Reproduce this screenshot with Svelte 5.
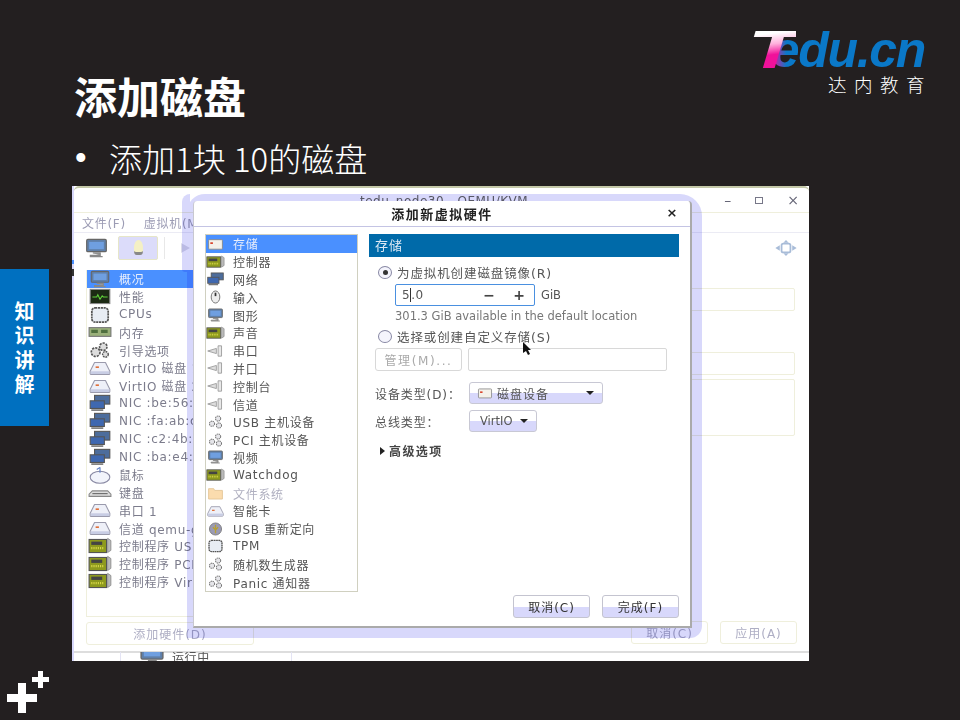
<script lang="ts">
	const hostRows = [
		{ icon: 'monitor', label: '概况', active: true },
		{ icon: 'perf', label: '性能' },
		{ icon: 'cpu', label: 'CPUs' },
		{ icon: 'ram', label: '内存' },
		{ icon: 'gears', label: '引导选项' },
		{ icon: 'disk', label: 'VirtIO 磁盘 1' },
		{ icon: 'disk', label: 'VirtIO 磁盘 2' },
		{ icon: 'nic', label: 'NIC :be:56:f1' },
		{ icon: 'nic', label: 'NIC :fa:ab:c6' },
		{ icon: 'nic', label: 'NIC :c2:4b:54' },
		{ icon: 'nic', label: 'NIC :ba:e4:df' },
		{ icon: 'mouse', label: '鼠标' },
		{ icon: 'keyboard', label: '键盘' },
		{ icon: 'disk', label: '串口 1' },
		{ icon: 'disk', label: '信道 qemu-ga' },
		{ icon: 'card', label: '控制程序 USB' },
		{ icon: 'card', label: '控制程序 PCI' },
		{ icon: 'card', label: '控制程序 VirtIO' }
	];

	const hardwareRows = [
		{ icon: 'storage', label: '存储', active: true },
		{ icon: 'card', label: '控制器' },
		{ icon: 'nic', label: '网络' },
		{ icon: 'pointer', label: '输入' },
		{ icon: 'monitor', label: '图形' },
		{ icon: 'card', label: '声音' },
		{ icon: 'plug', label: '串口' },
		{ icon: 'plug', label: '并口' },
		{ icon: 'plug', label: '控制台' },
		{ icon: 'plug', label: '信道' },
		{ icon: 'pci', label: 'USB 主机设备' },
		{ icon: 'pci', label: 'PCI 主机设备' },
		{ icon: 'monitor', label: '视频' },
		{ icon: 'card', label: 'Watchdog' },
		{ icon: 'folder', label: '文件系统', muted: true },
		{ icon: 'disk', label: '智能卡' },
		{ icon: 'usb', label: 'USB 重新定向' },
		{ icon: 'cpu', label: 'TPM' },
		{ icon: 'pci', label: '随机数生成器' },
		{ icon: 'pci', label: 'Panic 通知器' }
	];
</script>

{#snippet icon(kind: string)}
	<svg class="icon" viewBox="0 0 22 16" aria-hidden="true">
		{#if kind === 'monitor'}
			<rect x="3" y="1" width="16" height="10" rx="1" fill="#5f7fa8" stroke="#666"/>
			<rect x="5" y="3" width="12" height="6" fill="#6f9fe0"/>
			<path d="M8 12h6v2H6v1h10" fill="#999" stroke="#888"/>
		{:else if kind === 'perf'}
			<rect x="2" y="1" width="18" height="13" fill="#1c2a14" stroke="#888"/>
			<path d="M4 8h4l1-2 2 4 2-3 1 1h4" fill="none" stroke="#5fd03a"/>
		{:else if kind === 'cpu'}
			<rect x="3.5" y="1.5" width="15" height="13" rx="3" fill="#e8edf4" stroke="#555" stroke-width="1.6" stroke-dasharray="2 .6"/>
		{:else if kind === 'ram'}
			<rect x="1" y="4" width="20" height="8" fill="#9ab07a" stroke="#777"/>
			<path d="M3 6h6v3H3zM12 6h6v3h-6z" fill="#4f6f3f"/>
		{:else if kind === 'gears'}
			<circle cx="7" cy="10" r="4" fill="#ddd" stroke="#555" stroke-width="1.5" stroke-dasharray="2 1"/>
			<circle cx="14" cy="5" r="3.4" fill="#ddd" stroke="#555" stroke-width="1.5" stroke-dasharray="2 1"/>
			<circle cx="16" cy="12" r="2.6" fill="#ddd" stroke="#555" stroke-width="1.3" stroke-dasharray="1.6 .8"/>
		{:else if kind === 'disk'}
			<path d="M6 3h10l4 8v2a1 1 0 0 1-1 1H3a1 1 0 0 1-1-1v-2z" fill="#eef0f8" stroke="#9a9aac" stroke-linejoin="round"/>
			<path d="M2.500 11h17v2.500h-17z" fill="#c8cde4"/>
			<rect x="7" y="6.500" width="3" height="1.500" fill="#e0703a"/>
		{:else if kind === 'nic'}
			<rect x="6" y="1" width="14" height="8" fill="#4d6d9c" stroke="#555"/>
			<rect x="2" y="6" width="13" height="7" fill="#3f68b0" stroke="#555"/>
			<path d="M3 14.500h11" stroke="#777" stroke-width="1.500"/>
		{:else if kind === 'mouse'}
			<ellipse cx="11" cy="10" rx="9" ry="5.500" fill="#f2f4fb" stroke="#8a8aa4"/>
			<path d="M11 1v5M8 3l3-2" stroke="#5a7ac0" fill="none"/>
		{:else if kind === 'keyboard'}
			<path d="M4 7h14l3 3v2H1v-2z" fill="#ddd" stroke="#888"/>
			<path d="M4 9.500h14" stroke="#666"/>
		{:else if kind === 'card'}
			<rect x="1" y="2" width="16" height="12" fill="#8e9a1e" stroke="#555"/>
			<rect x="3" y="4" width="10" height="3" fill="#444"/>
			<path d="M3 10h12" stroke="#d8d84a" stroke-width="2" stroke-dasharray="1 1"/>
			<path d="M18 1v13l3-2V3z" fill="#bbb" stroke="#777" stroke-width=".6"/>
		{:else if kind === 'storage'}
			<rect x="3" y="3" width="16" height="11" rx="1" fill="#f4f1ea" stroke="#888"/>
			<rect x="5" y="6" width="3" height="2" fill="#d8442c"/>
		{:else if kind === 'pointer'}
			<ellipse cx="11" cy="8" rx="5" ry="7" fill="#eee" stroke="#666"/>
			<rect x="10" y="3" width="2" height="4" fill="#333"/>
		{:else if kind === 'plug'}
			<path d="M2 8l10-3v6z" fill="#ddd" stroke="#999"/>
			<path d="M14 2h4v12h-4z" fill="#e8e8e8" stroke="#999"/>
		{:else if kind === 'pci'}
			<g fill="#e6e6ea" stroke="#777" stroke-width="1.200" stroke-dasharray="1.600 .8">
				<circle cx="14" cy="4" r="3"/>
				<circle cx="7" cy="10" r="3"/>
				<circle cx="15" cy="12" r="3"/>
			</g>
		{:else if kind === 'folder'}
			<path d="M3 3h6l1 2h9v10H3z" fill="#fbdcae" stroke="#e3c594"/>
		{:else if kind === 'usb'}
			<circle cx="11" cy="8" r="7" fill="#9a9ab4" stroke="#777"/>
			<path d="M11 3v10M8 6l3 3 3-3" stroke="#b8a030" stroke-width="1.500" fill="none"/>
		{/if}
	</svg>
{/snippet}

<div class="slide">
	<header class="top">
		<div class="heading">
			<h1>添加磁盘</h1>
			<p class="bullet"><span class="dot">•</span><span>添加1块 10的磁盘</span></p>
		</div>
		<div class="logo">
			<div class="wordmark"><span class="t">T</span><span class="e">e</span><span class="rest">du.cn</span></div>
			<div class="cn">达内教育</div>
		</div>
	</header>

	<div class="shot">
		<div class="edge"></div>
		<div class="window">
			<div class="titlebar">
				<span class="win-title">tedu_node30 - QEMU/KVM</span>
				<span class="ctrl">
					<span>–</span><span class="max"></span><span>×</span>
				</span>
			</div>
			<div class="menubar"><span>文件(F)</span><span>虚拟机(M)</span></div>
			<div class="toolbar">
				<span class="tool">{@render icon('monitor')}</span>
				<span class="tool on"><span class="bulb"></span></span>
				<span class="sep"></span>
				<span class="play"></span>
				<span class="spread"></span>
				<svg class="move" viewBox="0 0 24 18" aria-hidden="true">
					<rect x="7" y="4" width="10" height="10" rx="2" fill="none" stroke="#a8bcd8" stroke-width="2"/>
					<path d="M0 9l5-3v6zM24 9l-5-3v6zM12 0l-3 3h6zM12 18l-3-3h6z" fill="#a8bcd8"/>
				</svg>
			</div>
			<div class="body">
				<div class="side">
					<ul class="host-list">
						{#each hostRows as row}
							<li class:active={row.active}>{@render icon(row.icon)}<span>{row.label}</span></li>
						{/each}
					</ul>
					<button class="ghost add">添加硬件(D)</button>
				</div>
				<div class="detail">
					<div class="fields">
						<div class="field one"></div>
						<div class="field two"></div>
						<div class="field three"></div>
					</div>
					<div class="actions">
						<button class="ghost act">取消(C)</button>
						<button class="ghost act">应用(A)</button>
					</div>
				</div>
			</div>
		</div>
		<div class="under">
			{@render icon('monitor')}<span>运行中</span>
		</div>

		<div class="halo"></div>
		<div class="dialog">
			<div class="dlg-title">
				<span>添加新虚拟硬件</span>
				<b class="close">×</b>
			</div>
			<div class="dlg-main">
				<ul class="hw-list">
					{#each hardwareRows as row}
						<li class:active={row.active} class:muted={row.muted}>{@render icon(row.icon)}<span>{row.label}</span></li>
					{/each}
				</ul>
				<div class="pane">
					<div class="pane-head">存储</div>
					<div class="radio-row first"><i class="radio on"></i>为虚拟机创建磁盘镜像(R)</div>
					<div class="size-row">
						<div class="spin">
							<span class="value">5<i class="caret"></i>.0</span>
							<span class="spin-btn">−</span>
							<span class="spin-btn">+</span>
						</div>
						<span>GiB</span>
					</div>
					<div class="avail">301.3 GiB available in the default location</div>
					<div class="radio-row second"><i class="radio"></i>选择或创建自定义存储(S)</div>
					<div class="manage-row">
						<button class="plain">管理(M)...</button>
						<div class="entry"></div>
					</div>
					<div class="form-row dev">
						<span class="form-label">设备类型(D)：</span>
						<div class="combo wide">{@render icon('storage')}<span>磁盘设备</span><i class="arrow"></i></div>
					</div>
					<div class="form-row bus">
						<span class="form-label">总线类型：</span>
						<div class="combo"><span>VirtIO</span><i class="arrow"></i></div>
					</div>
					<div class="advanced"><i></i>高级选项</div>
					<div class="dlg-actions">
						<button class="lav">取消(C)</button>
						<button class="lav">完成(F)</button>
					</div>
				</div>
			</div>
			<svg class="cursor" viewBox="0 0 10 14" aria-hidden="true">
				<path d="M1 0l0 11 3-2 2 4 2-1-2-4h3z" fill="#111"/>
			</svg>
		</div>
	</div>

	<aside class="tab"><span>知</span><span>识</span><span>讲</span><span>解</span></aside>
	<div class="plus big"></div>
	<div class="plus small"></div>
</div>

<style>
	:global(body) {
		margin: 0;
		background: #231f20;
	}

	.slide {
		position: relative;
		width: 960px;
		height: 720px;
		overflow: hidden;
		box-sizing: border-box;
		padding-left: 72px;
		background: #231f20;
		color: #fff;
		font-family: 'Noto Sans CJK SC', 'Liberation Sans', sans-serif;
	}

	.top {
		display: flex;
		justify-content: space-between;
		height: 186px;
		box-sizing: border-box;
		padding-right: 35px;
	}

	h1 {
		margin: 64px 0 0 2px;
		font-size: 43px;
		line-height: 62px;
		font-weight: 700;
	}

	.bullet {
		display: flex;
		margin: 9px 0 0 3px;
		font-size: 33px;
		line-height: 46px;
		font-weight: 300;
		font-family: 'Noto Sans CJK SC', 'Open Sans', sans-serif;
	}

	.dot {
		width: 34px;
		font-family: 'Liberation Sans', sans-serif;
	}

	.logo {
		display: flex;
		flex-direction: column;
		align-items: flex-end;
		padding-top: 23px;
	}

	.wordmark {
		display: flex;
		font: italic 700 50px/54px 'Liberation Sans', sans-serif;
		letter-spacing: -1.300px;
	}

	.t {
		display: inline-block;
		margin-right: -7px;
		font-size: 53px;
		transform: scaleX(1.55);
		transform-origin: left;
		background: linear-gradient(170deg, #fff 22%, #ffb0dc 40%, #f0119a 58%);
		-webkit-background-clip: text;
		background-clip: text;
		color: transparent;
	}

	.e {
		background: linear-gradient(90deg, #f0119a 0%, #0a78c8 55%);
		-webkit-background-clip: text;
		background-clip: text;
		color: transparent;
	}

	.rest {
		color: #0a78c8;
	}

	.cn {
		margin: -5px -7px 0 0;
		font-size: 18.500px;
		line-height: 24px;
		letter-spacing: 7.500px;
		font-weight: 300;
	}

	/* the embedded screenshot */
	.shot {
		position: relative;
		display: flex;
		flex-direction: column;
		width: 737px;
		height: 475px;
		overflow: hidden;
		background: #fff;
		color: #666;
		filter: blur(0.4px);
		font-family: 'DejaVu Sans', 'Noto Sans CJK SC', sans-serif;
		font-size: 12px;
	}

	.edge {
		position: absolute;
		left: 0;
		top: 0;
		bottom: 0;
		width: 2px;
		background: linear-gradient(#d8d8fb 15.500%, #4a90ff 15.500% 16.500%, #d8d8fb 16.500% 17.500%, #333 17.500% 19%, #d8d8fb 19%);
	}

	.window {
		display: flex;
		flex-direction: column;
		height: 467px;
		box-sizing: border-box;
		margin-left: 2px;
		border-top: 2px solid #c4c8a8;
		border-bottom: 2px solid #ddd;
		border-radius: 5px 5px 0 0;
	}

	.titlebar {
		display: flex;
		justify-content: space-between;
		height: 25px;
		box-sizing: border-box;
		padding: 5px 10px 0 286px;
		border-bottom: 1px solid #efefdc;
	}

	.win-title {
		color: #666;
		font-size: 12px;
		line-height: 16px;
		letter-spacing: 0.5px;
	}

	.ctrl {
		display: flex;
		align-items: center;
		gap: 24px;
		height: 14px;
		color: #667;
		font-size: 14px;
	}

	.max {
		width: 6px;
		height: 5px;
		border: 1px solid #778;
	}

	.menubar {
		display: flex;
		gap: 18px;
		height: 20px;
		padding-left: 8px;
		align-items: center;
		color: #9c9cb4;
		letter-spacing: 0.7px;
		border-bottom: 1px solid #ebebf4;
		box-sizing: border-box;
	}

	.toolbar {
		display: flex;
		align-items: center;
		height: 29px;
		padding: 0 12px 0 2px;
	}

	.tool {
		display: flex;
		align-items: center;
		justify-content: center;
		width: 40px;
	}

	.tool .icon {
		width: 27px;
		height: 20px;
	}

	.tool.on {
		height: 24px;
		margin-left: 2px;
		background: #dcdcfa;
		border: 1px solid #e6e6c8;
		border-radius: 2px;
		box-sizing: border-box;
	}

	.bulb {
		width: 9px;
		height: 12px;
		border-radius: 50% 50% 30% 30%;
		background: #f4f0c4;
		border-bottom: 3px solid #888;
	}

	.sep {
		width: 1px;
		height: 22px;
		margin-left: 6px;
		background: #e8e8e8;
	}

	.play {
		width: 0;
		height: 0;
		margin-left: 16px;
		border-left: 9px solid #dcdce8;
		border-top: 5px solid transparent;
		border-bottom: 5px solid transparent;
	}

	.spread {
		flex: 1;
	}

	.move {
		width: 22px;
		height: 16px;
	}

	.body {
		display: flex;
		justify-content: space-between;
		flex: 1;
		padding-top: 8px;
	}

	.side {
		display: flex;
		flex-direction: column;
		width: 168px;
		margin-left: 12px;
	}

	.host-list,
	.hw-list {
		margin: 0;
		padding: 0;
		list-style: none;
		white-space: nowrap;
		overflow: hidden;
	}

	.host-list {
		height: 347px;
		box-sizing: border-box;
		border: 1px solid #efefdc;
		border-top: 0;
		flex: none;
	}

	.host-list li,
	.hw-list li {
		display: flex;
		align-items: center;
		height: 17.800px;
		letter-spacing: 0.7px;
	}

	.host-list li {
		color: #7c7c8c;
		padding-left: 1px;
		gap: 7px;
	}

	.host-list li.active,
	.hw-list li.active {
		background: #4a90ff;
		color: #e8eefc;
	}

	.host-list .icon {
		width: 24px;
		height: 18px;
		flex: none;
	}

	.ghost {
		height: 23px;
		padding: 0;
		background: #fff;
		border: 1px solid #efefdc;
		border-radius: 3px;
		color: #aeaec4;
		font: inherit;
		letter-spacing: 1px;
	}

	.add {
		margin-top: 5px;
	}

	.detail {
		display: flex;
		flex-direction: column;
		justify-content: space-between;
		width: 240px;
		padding: 18px 12px 0 0;
		box-sizing: border-box;
	}

	.fields {
		display: flex;
		flex-direction: column;
		margin-right: 2px;
	}

	.field {
		border: 1px solid #efefdc;
		border-radius: 2px;
		box-sizing: border-box;
	}

	.one {
		height: 23px;
	}

	.two {
		height: 23px;
		margin-top: 41px;
	}

	.three {
		height: 57px;
		margin-top: 4px;
	}

	.actions {
		display: flex;
		justify-content: flex-end;
		gap: 12px;
		margin-bottom: 7px;
	}

	.act {
		width: 77px;
	}

	.under {
		display: flex;
		align-items: flex-start;
		gap: 5px;
		margin: -1px 0 0 48px;
		width: 172px;
		height: 9px;
		padding-left: 16px;
		box-sizing: border-box;
		border-left: 1px solid #e4e4f4;
		border-right: 1px solid #e4e4f4;
		color: #555;
		overflow: hidden;
	}

	.under .icon {
		width: 30px;
		height: 22px;
		margin-top: -8px;
	}

	.under span {
		margin-top: -4px;
		letter-spacing: 0.6px;
	}

	/* dialog on top of the main window, with its lavender focus glow */
	.halo {
		position: absolute;
		left: 115px;
		top: 8px;
		width: 515px;
		height: 444px;
		background: #d8d8fb;
		mix-blend-mode: multiply;
		border-radius: 18px 22px 12px 0;
	}

	.halo::before {
		content: '';
		position: absolute;
		left: -5px;
		top: 0;
		width: 8px;
		height: 78px;
		background: #d8d8fb;
		border-radius: 20px 0 0 8px;
	}

	.dialog {
		position: absolute;
		left: 121px;
		top: 15px;
		display: flex;
		flex-direction: column;
		width: 499px;
		height: 427px;
		background: #fff;
		border-radius: 4px 4px 0 0;
		border-right: 2px solid #aaa;
		border-bottom: 2px solid #aaa;
		border-left: 1px solid #c8c8d0;
		box-sizing: border-box;
		color: #555;
	}

	.dlg-title {
		display: flex;
		align-items: center;
		justify-content: center;
		position: relative;
		height: 25px;
		flex: none;
		border-bottom: 1px solid #c4c4e4;
		font-family: 'Noto Sans CJK SC', sans-serif;
		font-size: 13px;
		font-weight: 700;
		color: #222;
		letter-spacing: 1.500px;
	}

	.close {
		position: absolute;
		right: 11px;
		top: 1px;
		font: 700 13px/22px 'DejaVu Sans', sans-serif;
	}

	.dlg-main {
		display: flex;
		gap: 11px;
		padding: 7px 11px 0 11px;
		flex: 1;
	}

	.hw-list {
		width: 153px;
		height: 358px;
		flex: none;
		box-sizing: border-box;
		border: 1px solid #d0d0c0;
	}

	.hw-list li {
		gap: 8px;
		padding-left: 0;
		color: #555;
	}

	.hw-list li.muted {
		color: #b0b0c0;
	}

	.hw-list .icon {
		width: 19px;
		height: 14px;
		flex: none;
	}

	.pane {
		display: flex;
		flex-direction: column;
		flex: 1;
		min-width: 0;
	}

	.pane-head {
		height: 23px;
		line-height: 23px;
		padding-left: 6px;
		background: #006aa9;
		color: #dce8f4;
		font-size: 13px;
		letter-spacing: 1px;
	}

	.radio-row {
		display: flex;
		align-items: center;
		gap: 5px;
		height: 16px;
		padding-left: 9px;
		font-size: 12.500px;
		letter-spacing: 0.9px;
		white-space: nowrap;
	}

	.first {
		margin-top: 7px;
	}

	.second {
		margin-top: 3px;
	}

	.radio {
		position: relative;
		width: 14px;
		height: 13px;
		box-sizing: border-box;
		border: 1px solid #8888a4;
		border-radius: 50%;
		background: #f4f4fc;
		flex: none;
	}

	.radio.on::after {
		content: '';
		position: absolute;
		left: 3.500px;
		top: 3px;
		width: 5px;
		height: 5px;
		border-radius: 50%;
		background: #333;
	}

	.size-row {
		display: flex;
		align-items: center;
		gap: 6px;
		margin: 4px 0 0 26px;
		font-size: 11.500px;
	}

	.spin {
		display: flex;
		align-items: center;
		width: 140px;
		height: 22px;
		box-sizing: border-box;
		border: 1.500px solid #4a90e0;
		border-radius: 2px;
		font-size: 12px;
	}

	.value {
		flex: 1;
		padding-left: 6px;
		letter-spacing: 0.5px;
	}

	.caret {
		display: inline-block;
		width: 1px;
		height: 14px;
		margin: 0 0 -3px 0;
		background: #333;
	}

	.spin-btn {
		width: 30px;
		text-align: center;
		font-size: 14px;
		font-weight: 700;
		color: #444;
	}

	.avail {
		margin: 1px 0 0 26px;
		font-size: 11.500px;
		line-height: 18px;
		color: #777;
		white-space: nowrap;
	}

	.manage-row {
		display: flex;
		gap: 6px;
		margin: 4px 0 0 6px;
	}

	.plain {
		width: 87px;
		height: 23px;
		padding: 0;
		background: #fff;
		border: 1px solid #d8d8d8;
		border-radius: 3px;
		color: #aaa;
		font: inherit;
		letter-spacing: 1.600px;
	}

	.entry {
		width: 199px;
		height: 23px;
		box-sizing: border-box;
		border: 1px solid #d8d8d8;
		border-radius: 2px;
	}

	.form-row {
		display: flex;
		align-items: center;
		margin-left: 6px;
		letter-spacing: 0.9px;
	}

	.form-label {
		width: 94px;
		flex: none;
		white-space: nowrap;
	}

	.dev {
		margin-top: 11px;
	}

	.bus {
		margin-top: 6px;
	}

	.combo {
		display: flex;
		align-items: center;
		justify-content: space-between;
		width: 68px;
		height: 22px;
		box-sizing: border-box;
		padding: 0 8px 0 10px;
		border: 1px solid #c8c8d4;
		border-radius: 3px;
		background: linear-gradient(#fff 50%, #d8d8fb 50%);
		font-size: 11.500px;
		letter-spacing: 0;
	}

	.wide {
		width: 134px;
		padding-left: 6px;
		font-size: 12px;
		letter-spacing: 1px;
	}

	.wide .icon {
		width: 18px;
		height: 14px;
	}

	.wide span {
		flex: 1;
		margin-left: 3px;
	}

	.arrow {
		width: 0;
		height: 0;
		border-top: 4px solid #222;
		border-left: 4.500px solid transparent;
		border-right: 4.500px solid transparent;
	}

	.advanced {
		display: flex;
		align-items: center;
		gap: 4px;
		margin: 10px 0 0 11px;
		font-family: 'Noto Sans CJK SC', sans-serif;
		font-weight: 700;
		color: #444;
		letter-spacing: 1.400px;
	}

	.advanced i {
		width: 0;
		height: 0;
		border-left: 5px solid #222;
		border-top: 4px solid transparent;
		border-bottom: 4px solid transparent;
	}

	.dlg-actions {
		display: flex;
		justify-content: flex-end;
		gap: 12px;
		margin-top: auto;
		margin-bottom: 8px;
	}

	.lav {
		width: 77px;
		height: 23px;
		padding: 0;
		border: 1px solid #c4c4d0;
		border-radius: 3px;
		background: linear-gradient(#fff 52%, #d8d8fb 52%);
		color: #333;
		font: inherit;
		letter-spacing: 1px;
	}

	.cursor {
		position: absolute;
		left: 328px;
		top: 141px;
		width: 10px;
		height: 14px;
	}

	/* slide furniture */
	.tab {
		position: absolute;
		left: 0;
		top: 269px;
		display: flex;
		flex-direction: column;
		align-items: center;
		justify-content: center;
		width: 49px;
		height: 157px;
		background: #0070c0;
		font-size: 20px;
		line-height: 24.500px;
		font-weight: 700;
	}

	.plus {
		position: absolute;
		background:
			linear-gradient(#fff, #fff) center / 100% var(--bar) no-repeat,
			linear-gradient(#fff, #fff) center / var(--bar) 100% no-repeat;
	}

	.big {
		--bar: 8px;
		left: 7px;
		top: 683px;
		width: 30px;
		height: 30px;
	}

	.small {
		--bar: 5px;
		left: 32px;
		top: 671px;
		width: 17px;
		height: 17px;
	}
</style>
